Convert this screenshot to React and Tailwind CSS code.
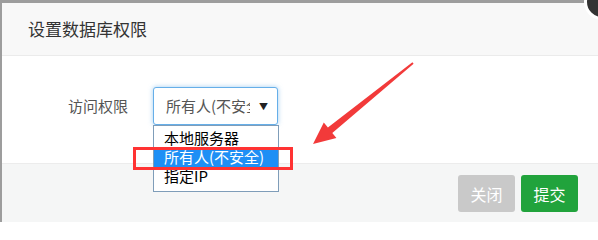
export default function App() {
  return (
    <div
      className="relative w-[598px] h-[222px] overflow-hidden bg-[#9d9d9d] pt-[3px] pl-[2px]"
      style={{ fontFamily: '"Noto Sans CJK SC", "Noto Sans", sans-serif' }}
    >
      <div className="flex flex-col h-full bg-white">
        <div className="h-[53px] shrink-0 bg-[#f8f8f8] border-b border-[#ebebeb] flex items-center pl-[26px] text-[17px] text-[#333]">
          设置数据库权限
        </div>
        <div className="h-[107px] shrink-0 flex items-start pt-[31px] pl-[66px]">
          <span className="w-[85px] h-[38px] flex items-center text-[15px] text-[#555]">访问权限</span>
          <div className="relative w-[125px] h-[38px] border border-[#66afe9] rounded-[3px] shadow-[0_0_5px_rgba(102,175,233,0.6)] flex items-center pl-[12px] pr-[9px] bg-white">
            <span className="w-[84px] overflow-hidden whitespace-nowrap text-[15px] text-[#555]">所有人(不安全)</span>
            <span className="ml-auto text-[9px] leading-none text-[#222]">▼</span>
            <div className="absolute left-[-1px] top-[37px] w-[126px] h-[67px] border border-[#7f9db9] bg-white pt-[3px] z-10">
              <div className="h-[19px] pl-[10px] flex items-center text-[15px] text-black whitespace-nowrap">本地服务器</div>
              <div className="h-[19px] pl-[10px] flex items-center text-[15px] text-white bg-[#1e8ff5] whitespace-nowrap">所有人(不安全)</div>
              <div className="h-[19px] pl-[10px] flex items-center text-[15px] text-black whitespace-nowrap">指定IP</div>
            </div>
          </div>
        </div>
        <div className="flex-1 bg-[#f5f6f6] border-t border-[#ececec] flex justify-end items-start pt-[11px] pr-[20px] gap-[6px]">
          <button className="w-[57px] h-[37px] rounded-[3px] bg-[#c9c9c9] text-white text-[16px]">关闭</button>
          <button className="w-[57px] h-[37px] rounded-[3px] bg-[#21a33c] text-white text-[16px]">提交</button>
        </div>
      </div>

      <div className="absolute left-[584px] top-[-16px] w-[36px] h-[36px] rounded-full bg-[#333] border-[3px] border-white" />

      <div className="absolute left-[133px] top-[147px] w-[160px] h-[23px] border-[3.5px] border-[#f33] z-20 pointer-events-none" />

      <svg className="absolute inset-0 z-20 pointer-events-none" width="598" height="222" viewBox="0 0 598 222">
        <polygon
          points="412.4,62.2 327.9,127.5 323.8,122.4 313,144 336.4,138 332.3,132.9 413.6,63.8"
          fill="#f23a3a"
        />
      </svg>
    </div>
  );
}
